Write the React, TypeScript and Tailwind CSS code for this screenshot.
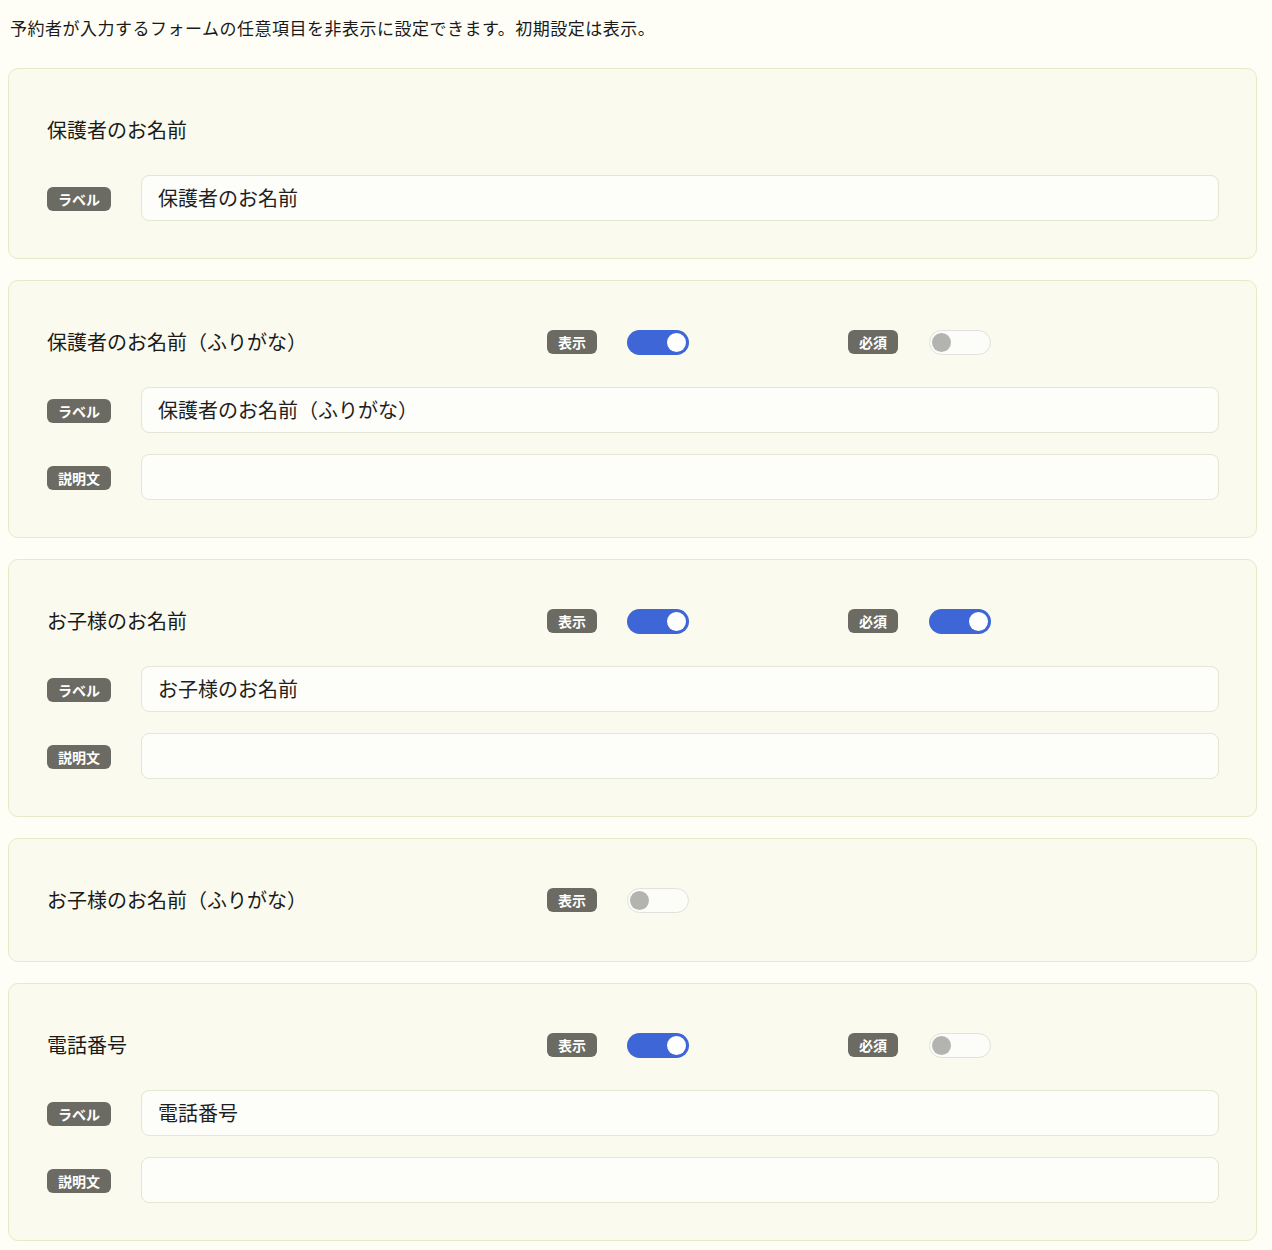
import React from 'react';

type Field = {
  title: string;
  label?: string;
  desc?: boolean;
  show?: boolean;
  required?: boolean;
};

const fields: Field[] = [
  { title: '保護者のお名前', label: '保護者のお名前' },
  { title: '保護者のお名前（ふりがな）', label: '保護者のお名前（ふりがな）', desc: true, show: true, required: false },
  { title: 'お子様のお名前', label: 'お子様のお名前', desc: true, show: true, required: true },
  { title: 'お子様のお名前（ふりがな）', show: false },
  { title: '電話番号', label: '電話番号', desc: true, show: true, required: false },
];

const Badge = ({ children }: { children: React.ReactNode }) => (
  <span className="inline-flex h-[24px] items-center rounded-[6px] bg-[#6b6b63] px-[11px] text-[14px] font-bold leading-none text-white">
    {children}
  </span>
);

const Toggle = ({ on }: { on: boolean }) =>
  on ? (
    <div className="flex h-[25px] w-[62px] items-center justify-end rounded-full bg-[#3f66d6] pr-[3px]">
      <div className="h-[19px] w-[19px] rounded-full bg-white" />
    </div>
  ) : (
    <div className="flex h-[25px] w-[62px] items-center rounded-full border border-[#e2e2dc] bg-[#fcfcf8] pl-[2px]">
      <div className="h-[19px] w-[19px] rounded-full bg-[#b3b3b0]" />
    </div>
  );

const Row = ({ badge, value }: { badge: string; value?: string }) => (
  <div className="flex items-center">
    <div className="w-[94px]">
      <Badge>{badge}</Badge>
    </div>
    <div className="flex h-[46px] flex-1 items-center rounded-[8px] border border-[#e6e6d4] bg-[#fdfdf9] px-[16px] text-[20px] text-[#1f1f1f]">
      {value}
    </div>
  </div>
);

export default function App() {
  return (
    <div
      className="min-h-[1250px] bg-[#fefef6] px-[8px] pt-[16px] pb-[8px] text-[#1a1a1a]"
      style={{ fontFamily: '"Noto Sans CJK JP", "Noto Sans", sans-serif' }}
    >
      <p className="ml-[2px] text-[17px] leading-[24px] tracking-[0.5px]">
        予約者が入力するフォームの任意項目を非表示に設定できます。初期設定は表示。
      </p>
      <div className="mt-[28px] flex w-[1249px] flex-col gap-[21px]">
        {fields.map((f) => (
          <div
            key={f.title}
            className="flex flex-col gap-[21px] rounded-[10px] border border-[#e9e9c8] bg-[#fafaee] pl-[38px] pr-[37px] pt-[37px] pb-[37px]"
          >
            <div className="flex h-[48px] items-center">
              <div className="w-[500px] text-[20px]">{f.title}</div>
              {f.show !== undefined && (
                <div className="flex w-[301px] items-center">
                  <Badge>表示</Badge>
                  <div className="ml-[30px]">
                    <Toggle on={f.show} />
                  </div>
                </div>
              )}
              {f.required !== undefined && (
                <div className="flex items-center">
                  <Badge>必須</Badge>
                  <div className="ml-[31px]">
                    <Toggle on={f.required} />
                  </div>
                </div>
              )}
            </div>
            {f.label && <Row badge="ラベル" value={f.label} />}
            {f.desc && <Row badge="説明文" />}
          </div>
        ))}
      </div>
    </div>
  );
}
